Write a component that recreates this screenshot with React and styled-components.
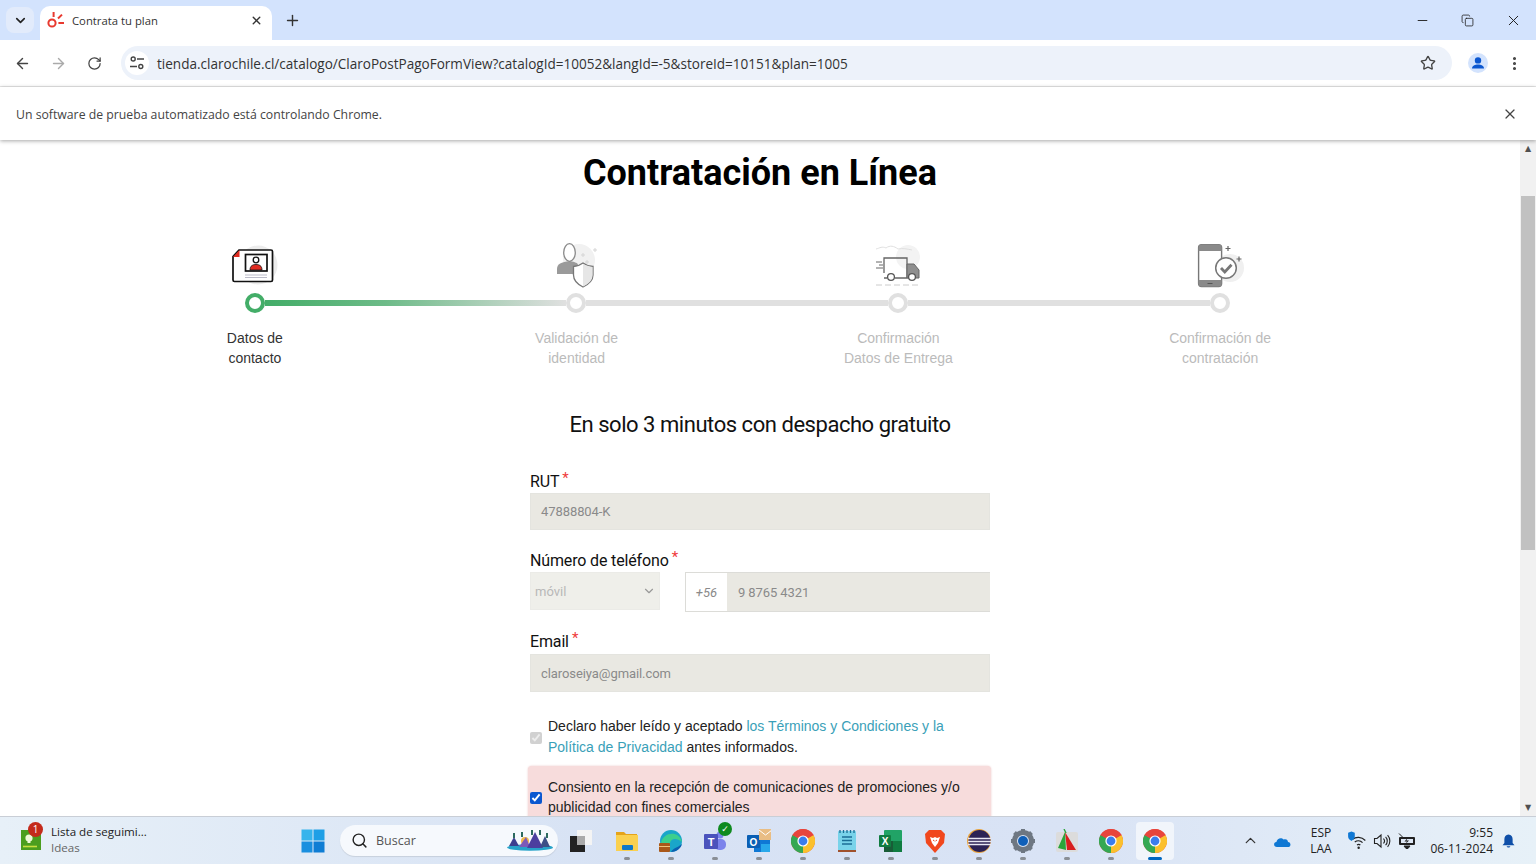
import styled, { createGlobalStyle } from 'styled-components'
import { ArrowLeft, ArrowRight, ChevronDown, ChevronUp, Copy, EllipsisVertical, Minus, Plus, RotateCw, Search, Star, X } from 'lucide-react'

const GlobalStyle = createGlobalStyle`
html, body { margin: 0; padding: 0; background: #fff; overflow: hidden; }
* { box-sizing: border-box; }
`

const ClaroLogo = () => (
    <svg width="18" height="18" viewBox="0 0 18 18" fill="none" stroke="#e8392f">
        <circle cx="5" cy="12" r="3.6" strokeWidth="2" />
        <path d="M6.6 1 L6.6 6 M11 7.5 L15 3.6 M11.4 12 H17" strokeWidth="2" />
    </svg>
)

const SiteSettings = () => (
    <svg width="16" height="16" viewBox="0 0 16 16" fill="none" stroke="#444" strokeWidth="1.4">
        <circle cx="4.2" cy="4" r="2" />
        <path d="M8 4 H15 M1 11.5 H8" />
        <circle cx="11.8" cy="11.5" r="2" />
    </svg>
)

const ProfileIcon = () => (
    <svg width="20" height="20" viewBox="0 0 20 20">
        <circle cx="10" cy="10" r="10" fill="#d3e3fd" />
        <circle cx="10" cy="7.4" r="3.2" fill="#0b57d0" />
        <path d="M4 15.6 C4 12.4 7 11.4 10 11.4 C13 11.4 16 12.4 16 15.6 Z" fill="#0b57d0" />
    </svg>
)

const ContactIcon = () => (
    <svg width="60" height="50" viewBox="0 0 60 50" fill="none">
        <circle cx="33" cy="25" r="19.5" fill="#ececec" />
        <path d="M14 10 H46 Q47.5 10 47.5 11.5 V40 Q47.5 41.5 46 41.5 H9.5 Q8 41.5 8 40 V16.5 Z" fill="#fff" stroke="#111" strokeWidth="1.7" />
        <path d="M8 17 L14.5 10 V17 Z" fill="#e02b20" />
        <rect x="20.5" y="14.5" width="21.5" height="16.5" fill="#fff" stroke="#111" strokeWidth="1.7" />
        <circle cx="31" cy="20" r="2.8" fill="#fff" stroke="#111" strokeWidth="1.3" />
        <path d="M25 30 C25 25.5 28 24.5 31 24.5 C34 24.5 37 25.5 37 30 Z" fill="#e02b20" stroke="#111" strokeWidth="0.8" />
        <path d="M20 35 H42 M20 37.5 H42" stroke="#aab" strokeWidth="0.8" />
    </svg>
)

const IdentityIcon = () => (
    <svg width="60" height="50" viewBox="0 0 60 50" fill="none">
        <circle cx="32" cy="20" r="16" fill="#f1f1f1" />
        <path d="M10 34 V29 C10 24 14 22 23 21 C28 22 31 23 31 25 L28 34 Z" fill="#9a9a9a" />
        <ellipse cx="22.5" cy="12.5" rx="5.8" ry="8.8" fill="#fff" stroke="#8a8a8a" strokeWidth="1.3" />
        <path d="M36 23 C32 26 29 26.5 26.5 26.5 V35 C26.5 41 31 44.5 36 47 C41 44.5 46 41 46 35 V26.5 C43 26.5 40 26 36 23 Z" fill="#fff" stroke="#777" strokeWidth="1.3" />
        <path d="M36 24 C40 26 43 26.5 45.5 27 V35 C45.5 41 41 44 36 46.5 Z" fill="#e6e6e6" />
        <path d="M36 13 V17 M34 15 H38 M48 8 V12 M46 10 H50 M40 20 V24 M38 22 H42" stroke="#d5d5d5" strokeWidth="1" />
    </svg>
)

const DeliveryIcon = () => (
    <svg width="60" height="50" viewBox="0 0 60 50" fill="none">
        <circle cx="40" cy="17" r="12" fill="#f3f3f3" />
        <path d="M8 9 C12 8 14 6 18 8 C22 5 26 6 30 9 C35 8 39 9 44 10" stroke="#ddd" strokeWidth="0.9" />
        <path d="M16 33 V18 H39 V38 H27 M16 38 H19" stroke="#666" strokeWidth="1.3" />
        <path d="M39 24 H46 L51 30 V38 H39 Z" fill="#8f8f8f" stroke="#666" strokeWidth="1" />
        <path d="M8 22 H14 M11 25 H15 M8 28 H15" stroke="#666" strokeWidth="1" />
        <circle cx="23" cy="37" r="3.4" fill="#fff" stroke="#555" strokeWidth="1.3" />
        <circle cx="44" cy="37" r="3.4" fill="#fff" stroke="#555" strokeWidth="1.3" />
        <path d="M8 45 H52" stroke="#ccc" strokeWidth="1" strokeDasharray="6 3" />
    </svg>
)

const ConfirmIcon = () => (
    <svg width="60" height="50" viewBox="0 0 60 50" fill="none">
        <circle cx="40" cy="28" r="14" fill="#f0f0f0" />
        <rect x="8.6" y="4.6" width="23" height="42" rx="3" fill="#fff" stroke="#777" strokeWidth="1.4" />
        <path d="M8.6 11 V7.6 Q8.6 4.6 11.6 4.6 H28.6 Q31.6 4.6 31.6 7.6 V11 Z" fill="#8a8a8a" />
        <path d="M8.6 40 V43.6 Q8.6 46.6 11.6 46.6 H28.6 Q31.6 46.6 31.6 43.6 V40 Z" fill="#8a8a8a" />
        <path d="M17.5 43.5 H22.5" stroke="#555" strokeWidth="1" />
        <circle cx="36" cy="28" r="10.3" fill="#fff" stroke="#777" strokeWidth="1.5" />
        <path d="M31 28 L34.8 32 L41.5 24.8" stroke="#777" strokeWidth="2.8" />
        <path d="M38 6 V11 M35.5 8.5 H40.5 M49 16.5 V21.5 M46.5 19 H51.5" stroke="#666" strokeWidth="1.2" />
    </svg>
)

const WatchlistIcon = () => (
    <svg width="24" height="24" viewBox="0 0 24 24">
        <rect x="1" y="3" width="20" height="20" fill="#4b9e1f" />
        <circle cx="9" cy="11" r="3.6" fill="#eef8d8" />
        <rect x="7.5" y="14" width="3" height="2" fill="#eef8d8" />
        <path d="M3 19.5 H17" stroke="#c8e040" strokeWidth="1.6" />
    </svg>
)

const StartIcon = () => (
    <svg width="24" height="24" viewBox="0 0 24 24">
        <rect x="0.5" y="0.5" width="11" height="11" fill="#36b4ec" />
        <rect x="12.5" y="0.5" width="11" height="11" fill="#1e9fe6" />
        <rect x="0.5" y="12.5" width="11" height="11" fill="#1a8fdf" />
        <rect x="12.5" y="12.5" width="11" height="11" fill="#0f7dd4" />
    </svg>
)

const SearchScene = () => (
    <svg width="48" height="24" viewBox="0 0 48 24">
        <ellipse cx="24" cy="18.5" rx="23" ry="3.2" fill="#27a3c9" />
        <circle cx="19" cy="12" r="4" fill="#f3b84a" />
        <path d="M3 17 L8 8 L13 17 Z" fill="#3c3f8f" />
        <path d="M13 18 L20 8 L24 18 Z" fill="#7c5ab8" />
        <path d="M21 19 L29 3 L37 19 Z" fill="#4c3f9f" />
        <path d="M34 18 L39 7 L44 18 Z" fill="#3d4f86" />
        <path d="M8 9 V4 M16 8 V3 M26 6 V1 M34 6 V1 M41 9 V4" stroke="#2d6a5f" strokeWidth="2" />
    </svg>
)

const TaskView = () => (
    <svg width="24" height="24" viewBox="0 0 24 24">
        <rect x="8" y="1" width="15" height="15" fill="#f4f4f4" />
        <rect x="1" y="7" width="15" height="16" fill="#222" />
        <rect x="8" y="7" width="8" height="9" fill="#aaa" />
    </svg>
)

const FolderIcon = () => (
    <svg width="24" height="24" viewBox="0 0 24 24">
        <path d="M1 3 H9 L11 5 H22 V8 H1 Z" fill="#e5a31a" />
        <rect x="1" y="6" width="22" height="16" fill="#fad04f" />
        <rect x="7" y="16" width="11" height="5" rx="1" fill="#0f78c8" />
    </svg>
)

const EdgeIcon = () => (
    <svg width="24" height="24" viewBox="0 0 24 24">
        <circle cx="12" cy="12" r="11" fill="#1aa6c9" />
        <path d="M2 14 C4 3 20 1 23 13 C18 9 12 9 11 14 Z" fill="#3ccf8e" />
        <path d="M12 23 C18 23 22 19 23 15 C18 19 14 19 12 23 Z" fill="#0b5fb0" />
        <rect x="0" y="14" width="11" height="9" rx="1" fill="#a9581a" />
        <rect x="0" y="17" width="11" height="1" fill="#f1c27a" />
    </svg>
)

const TeamsIcon = () => (
    <svg width="24" height="24" viewBox="0 0 24 24">
        <circle cx="17" cy="6" r="3.5" fill="#7b83eb" />
        <rect x="11" y="10" width="12" height="11" rx="5" fill="#7b83eb" />
        <rect x="1" y="5" width="14" height="15" rx="1" fill="#4b53bc" />
        <text x="8" y="16.5" fontSize="11" fontFamily="Liberation Sans" fontWeight="700" fill="#fff" textAnchor="middle">T</text>
    </svg>
)

const OutlookIcon = () => (
    <svg width="24" height="24" viewBox="0 0 24 24">
        <rect x="7" y="8" width="16" height="15" fill="#0f78d4" />
        <rect x="14" y="15" width="9" height="8" fill="#28a8ea" />
        <rect x="0" y="6" width="13" height="13" rx="1" fill="#0a5fb4" />
        <text x="6.5" y="16.5" fontSize="10" fontFamily="Liberation Sans" fontWeight="700" fill="#fff" textAnchor="middle">O</text>
        <rect x="12" y="0" width="13" height="11" fill="#e9bd84" />
        <path d="M12 1 L18.5 6 L25 1" fill="none" stroke="#fff" strokeWidth="1" />
    </svg>
)

const ChromeIcon = () => (
    <svg width="24" height="24" viewBox="0 0 24 24">
        <circle cx="12" cy="12" r="12" fill="#e8453c" />
        <path d="M12 12 L1.6 6 A12 12 0 0 0 12 24 Z" fill="#34a853" />
        <path d="M12 12 L12 24 A12 12 0 0 0 22.4 6 Z" fill="#fbc02d" />
        <path d="M12 12 L1.6 6 A12 12 0 0 1 22.4 6 Z" fill="#e8453c" />
        <circle cx="12" cy="12" r="5.6" fill="#fff" />
        <circle cx="12" cy="12" r="4.4" fill="#3b7ded" />
    </svg>
)

const NotepadIcon = () => (
    <svg width="24" height="24" viewBox="0 0 24 24">
        <rect x="3" y="2" width="18" height="20" rx="1" fill="#79d3ea" />
        <rect x="3" y="21" width="18" height="2" fill="#a0522d" />
        <path d="M5 1 V4 M8.5 1 V4 M12 1 V4 M15.5 1 V4 M19 1 V4" stroke="#1b6e96" strokeWidth="1.3" />
        <path d="M7 8 H17 M7 11.5 H17 M7 15 H17" stroke="#1b6e96" strokeWidth="1.4" />
    </svg>
)

const ExcelIcon = () => (
    <svg width="24" height="24" viewBox="0 0 24 24">
        <rect x="5" y="1" width="18" height="22" rx="1" fill="#21a366" />
        <rect x="14" y="12" width="9" height="11" fill="#107c41" />
        <rect x="5" y="12" width="9" height="11" fill="#185c37" />
        <rect x="0" y="6" width="12" height="12" rx="1" fill="#107c41" />
        <text x="6" y="15.5" fontSize="10" fontFamily="Liberation Sans" fontWeight="700" fill="#fff" textAnchor="middle">X</text>
    </svg>
)

const BraveIcon = () => (
    <svg width="24" height="24" viewBox="0 0 24 24">
        <path d="M6 1 H18 L22 5 L21 14 L12 24 L3 14 L2 5 Z" fill="#f1471d" />
        <path d="M7 8 L10 9 L12 8 L14 9 L17 8 L15 14 L12 18 L9 14 Z" fill="#fff" />
        <path d="M10 11 L11.5 12 M14 11 L12.5 12" stroke="#f1471d" strokeWidth="1" />
    </svg>
)

const EclipseIcon = () => (
    <svg width="24" height="24" viewBox="0 0 24 24">
        <circle cx="12" cy="12" r="12" fill="#e8a33d" />
        <circle cx="12.5" cy="12" r="11" fill="#2c2255" />
        <path d="M1 9.5 H24 M1 12.5 H24 M1 15.5 H24" stroke="#e9e7f3" strokeWidth="1.3" />
    </svg>
)

const GearIcon = () => (
    <svg width="24" height="24" viewBox="0 0 24 24">
        <circle cx="12" cy="12" r="8.5" fill="none" stroke="#6e7782" strokeWidth="5" />
        <path d="M12 0 V4 M12 20 V24 M0 12 H4 M20 12 H24 M3.5 3.5 L6.5 6.5 M17.5 17.5 L20.5 20.5 M3.5 20.5 L6.5 17.5 M17.5 6.5 L20.5 3.5" stroke="#6e7782" strokeWidth="4" />
        <circle cx="12" cy="12" r="5" fill="#0f5fb8" />
    </svg>
)

const SnipIcon = () => (
    <svg width="24" height="24" viewBox="0 0 24 24">
        <rect x="1" y="3" width="22" height="20" rx="2" fill="#dcdcdc" />
        <path d="M10 3 L21 21 H12 Z" fill="#d81e1e" />
        <path d="M10 3 L3 19 L11 21 Z" fill="#2aa53a" />
        <path d="M9 0 L11 4" stroke="#2aa53a" strokeWidth="1.4" />
    </svg>
)

const CloudIcon = () => (
    <svg width="18" height="12" viewBox="0 0 18 12">
        <path d="M4 12 C0.5 12 0 7.5 3.4 7 C4 3.4 8.4 2 10.6 4.6 C14 3.6 15 6 15 7 C18 7 18.6 12 15 12 Z" fill="#0f78d4" />
    </svg>
)

const WifiIcon = () => (
    <svg width="20" height="20" viewBox="0 0 18 18" fill="none" stroke="#222" strokeWidth="1.1">
        <path d="M5 7.5 C8 5 13 5 16.5 8.5 M7 10 C9 8.5 12 8.5 14 10.5 M9 12.5 C10 11.8 11.2 11.8 12 12.8" />
        <circle cx="10.5" cy="15" r="1.1" fill="#222" stroke="none" />
        <path d="M1 1.5 L4 0.5 L7 1.5 V5 C7 7 5.5 8 4 9 C2.5 8 1 7 1 5 Z" fill="#0f78d4" stroke="none" />
    </svg>
)

const SpeakerIcon = () => (
    <svg width="18" height="18" viewBox="0 0 18 18" fill="none" stroke="#222" strokeWidth="1.1">
        <path d="M1.5 6.5 H4 L8 3 V15 L4 11.5 H1.5 Z" />
        <path d="M10.5 6.5 C11.8 8 11.8 10 10.5 11.5 M12.6 4.8 C14.8 7 14.8 11 12.6 13.2 M14.6 3.2 C17.6 6.5 17.6 11.5 14.6 14.8" />
    </svg>
)

const BatteryIcon = () => (
    <svg width="18" height="18" viewBox="0 0 18 18">
        <rect x="1" y="5" width="16" height="8" rx="1" fill="#222" />
        <path d="M1 1.5 L4.5 5 M6 14 L12 14 L10 16.5 L8 16.5 Z" stroke="#222" fill="#222" />
        <path d="M3 7 H15 V11 H3 Z" fill="#dfe8f5" />
        <path d="M9.5 6 L6.5 9.5 H9 L7.5 12 L11 8.5 H8.5 Z" fill="#222" />
    </svg>
)

const BellIcon = () => (
    <svg width="15" height="16" viewBox="0 0 16 16">
        <path d="M8 1 C11 1 12.4 3.4 12.4 6 V10 L14.4 12.6 H1.6 L3.6 10 V6 C3.6 3.4 5 1 8 1 Z" fill="#0f4fa8" />
        <path d="M6 13.6 H10 C9.6 15.4 6.4 15.4 6 13.6 Z" fill="#0f4fa8" />
    </svg>
)

const steps = [
    { label: ['Datos de', 'contacto'], Icon: ContactIcon, active: true },
    { label: ['Validación de', 'identidad'], Icon: IdentityIcon },
    { label: ['Confirmación', 'Datos de Entrega'], Icon: DeliveryIcon },
    { label: ['Confirmación de', 'contratación'], Icon: ConfirmIcon },
]

const apps = [
    { Icon: TaskView },
    { Icon: FolderIcon, open: true },
    { Icon: EdgeIcon, open: true },
    { Icon: TeamsIcon, open: true, check: true },
    { Icon: OutlookIcon, open: true },
    { Icon: ChromeIcon, open: true },
    { Icon: NotepadIcon, open: true },
    { Icon: ExcelIcon, open: true },
    { Icon: BraveIcon, open: true },
    { Icon: EclipseIcon, open: true },
    { Icon: GearIcon, open: true },
    { Icon: SnipIcon, open: true },
    { Icon: ChromeIcon, open: true },
    { Icon: ChromeIcon, open: true, active: true },
]

const App = () => {
    return (
        <Screen>
            <GlobalStyle />
            <TabStrip>
                <TabMenu><ChevronDown size={15} strokeWidth={2.6} /></TabMenu>
                <Tab>
                    <ClaroLogo />
                    <TabTitle>Contrata tu plan</TabTitle>
                    <X size={13} strokeWidth={2.6} color="#333" />
                </Tab>
                <NewTab><Plus size={17} strokeWidth={2} /></NewTab>
                <WindowControls>
                    <WindowButton><Minus size={15} strokeWidth={1.5} /></WindowButton>
                    <WindowButton><Copy size={13} strokeWidth={1.5} /></WindowButton>
                    <WindowButton><X size={17} strokeWidth={1.4} /></WindowButton>
                </WindowControls>
            </TabStrip>

            <Toolbar>
                <NavButton><ArrowLeft size={17} strokeWidth={2} /></NavButton>
                <NavButton $off><ArrowRight size={17} strokeWidth={2} /></NavButton>
                <NavButton><RotateCw size={15} strokeWidth={2} /></NavButton>
                <Omnibox>
                    <SiteBadge><SiteSettings /></SiteBadge>
                    <Url>tienda.clarochile.cl/catalogo/ClaroPostPagoFormView?catalogId=10052&amp;langId=-5&amp;storeId=10151&amp;plan=1005</Url>
                    <Star size={16} strokeWidth={2} color="#444" />
                </Omnibox>
                <ProfileSlot><ProfileIcon /></ProfileSlot>
                <MenuSlot><EllipsisVertical size={17} strokeWidth={2.4} color="#444" /></MenuSlot>
            </Toolbar>

            <InfoBar>
                <InfoText>Un software de prueba automatizado está controlando Chrome.</InfoText>
                <X size={16} strokeWidth={1.8} color="#444" />
            </InfoBar>

            <Viewport>
                <Page>
                    <Title>Contratación en Línea</Title>

                    <Stepper>
                        <StepRow>
                            {steps.map(({ Icon }, i) => <StepIcon key={i}><Icon /></StepIcon>)}
                        </StepRow>
                        <Track>
                            <Dot $active />
                            <Bar $active />
                            <Dot />
                            <Bar />
                            <Dot />
                            <Bar />
                            <Dot />
                        </Track>
                        <StepRow>
                            {steps.map((s, i) => (
                                <StepLabel key={i} $active={s.active}>{s.label[0]}<br />{s.label[1]}</StepLabel>
                            ))}
                        </StepRow>
                    </Stepper>

                    <Subtitle>En solo 3 minutos con despacho gratuito</Subtitle>

                    <Form>
                        <FieldLabel>RUT<Req>*</Req></FieldLabel>
                        <TextValue $h={37}>47888804-K</TextValue>

                        <FieldLabel $gap={19}>Número de teléfono<Req>*</Req></FieldLabel>
                        <PhoneRow>
                            <PhoneType>
                                móvil
                                <ChevronDown size={14} strokeWidth={2} color="#999" />
                            </PhoneType>
                            <PhoneGroup>
                                <Prefix>+56</Prefix>
                                <PhoneValue>9 8765 4321</PhoneValue>
                            </PhoneGroup>
                        </PhoneRow>

                        <FieldLabel $gap={18} $tall>Email<Req>*</Req></FieldLabel>
                        <TextValue $h={38}>claroseiya@gmail.com</TextValue>

                        <CheckRow>
                            <Check type="checkbox" checked disabled readOnly />
                            <CheckText>Declaro haber leído y aceptado <TermsLink>los Términos y Condiciones y la Política de Privacidad</TermsLink> antes informados.</CheckText>
                        </CheckRow>
                        <ConsentBox>
                            <Check type="checkbox" checked readOnly />
                            <ConsentText>Consiento en la recepción de comunicaciones de promociones y/o publicidad con fines comerciales</ConsentText>
                        </ConsentBox>
                    </Form>
                </Page>
                <Scrollbar>
                    <ScrollArrow>▲</ScrollArrow>
                    <ScrollThumb />
                    <ScrollArrow>▼</ScrollArrow>
                </Scrollbar>
            </Viewport>

            <Taskbar>
                <Widget>
                    <WidgetIcon>
                        <WatchlistIcon />
                        <Badge>1</Badge>
                    </WidgetIcon>
                    <WidgetText>
                        <span>Lista de seguimi...</span>
                        <WidgetSub>Ideas</WidgetSub>
                    </WidgetText>
                </Widget>
                <StartSlot><StartIcon /></StartSlot>
                <SearchBox>
                    <Search size={17} strokeWidth={2} color="#222" />
                    <SearchText>Buscar</SearchText>
                    <SearchScene />
                </SearchBox>
                <AppList>
                    {apps.map(({ Icon, open, active, check }, i) => (
                        <AppSlot key={i} $active={active}>
                            <Icon />
                            {check && <PresenceBadge>✓</PresenceBadge>}
                            {open && <AppMark $active={active} />}
                        </AppSlot>
                    ))}
                </AppList>
                <Tray>
                    <TraySlot $w={26}><ChevronUp size={17} strokeWidth={1.8} color="#333" /></TraySlot>
                    <TraySlot $w={38}><CloudIcon /></TraySlot>
                    <Lang><span>ESP</span><span>LAA</span></Lang>
                    <TraySlot $w={25}><WifiIcon /></TraySlot>
                    <TraySlot $w={25}><SpeakerIcon /></TraySlot>
                    <TraySlot $w={25}><BatteryIcon /></TraySlot>
                    <Clock><span>9:55</span><span>06-11-2024</span></Clock>
                    <TraySlot $w={30}><BellIcon /></TraySlot>
                </Tray>
            </Taskbar>
        </Screen>
    )
}

export default App

const Screen = styled.div`
width: 1536px;
height: 864px;
display: flex;
flex-direction: column;
overflow: hidden;
background: #fff;
`

const TabStrip = styled.div`
height: 40px;
flex: none;
display: flex;
align-items: flex-end;
background: #d3e3fd;
`

const TabMenu = styled.div`
width: 28px;
height: 26px;
margin: 0 6px 7px 6px;
display: flex;
align-items: center;
justify-content: center;
border-radius: 8px;
background: #e2ebfb;
color: #222;
`

const Tab = styled.div`
width: 232px;
height: 34px;
display: flex;
align-items: center;
gap: 7px;
padding: 0 9px 6px 7px;
background: #fff;
border-radius: 10px 10px 0 0;
`

const TabTitle = styled.div`
flex: 1;
font: 11.3px "Open Sans", sans-serif;
color: #333;
`

const NewTab = styled.div`
width: 40px;
height: 40px;
display: flex;
align-items: center;
justify-content: center;
color: #333;
`

const WindowControls = styled.div`
margin-left: auto;
display: flex;
height: 40px;
`

const WindowButton = styled.div`
width: 45.5px;
display: flex;
align-items: center;
justify-content: center;
color: #222;
`

const Toolbar = styled.div`
height: 47px;
flex: none;
display: flex;
align-items: center;
background: #fff;
border-bottom: 1px solid #e8e8e8;
border-radius: 8px 8px 0 0;
padding-left: 4px;
`

const NavButton = styled.div`
width: 36px;
display: flex;
justify-content: center;
color: ${p => p.$off ? '#aaa' : '#444'};
`

const Omnibox = styled.div`
width: 1331px;
height: 34px;
margin-left: 9px;
display: flex;
align-items: center;
padding: 0 16px 0 4px;
background: #edf2fa;
border-radius: 17px;
`

const SiteBadge = styled.div`
width: 24px;
height: 24px;
display: flex;
align-items: center;
justify-content: center;
background: #fff;
border-radius: 50%;
`

const Url = styled.div`
flex: 1;
margin-left: 8px;
padding-top: 1px;
font: 13.55px "Open Sans", sans-serif;
color: #333;
white-space: nowrap;
`

const ProfileSlot = styled.div`
width: 52px;
display: flex;
justify-content: center;
`

const MenuSlot = styled.div`
width: 20px;
display: flex;
justify-content: center;
`

const InfoBar = styled.div`
height: 53px;
flex: none;
display: flex;
align-items: center;
justify-content: space-between;
padding: 0 18px 0 16px;
background: #fff;
box-shadow: 0 1px 4px rgba(0, 0, 0, 0.35);
position: relative;
z-index: 1;
`

const InfoText = styled.div`
padding-top: 1px;
font: 12.25px "Open Sans", sans-serif;
color: #444;
`

const Viewport = styled.div`
flex: 1;
min-height: 0;
display: flex;
overflow: hidden;
`

const Page = styled.div`
flex: 1;
min-width: 0;
padding-top: 13px;
`

const Title = styled.h1`
margin: 0;
font: 700 36px/40px Roboto, sans-serif;
color: #000;
text-align: center;
`

const Stepper = styled.div`
width: 1287px;
margin: 47px 0 0 94px;
`

const StepRow = styled.div`
display: grid;
grid-template-columns: repeat(4, 1fr);
`

const StepIcon = styled.div`
height: 50px;
display: flex;
justify-content: center;
`

const Track = styled.div`
height: 20px;
margin: 3px 0 15px;
padding: 0 151px 0 150.5px;
display: flex;
align-items: center;
`

const Dot = styled.div`
width: 20px;
height: 20px;
flex: none;
border-radius: 50%;
background: #fff;
border: 4px solid ${p => p.$active ? '#43ad68' : '#e0e0e0'};
`

const Bar = styled.div`
flex: 1;
height: 6px;
background: ${p => p.$active ? 'linear-gradient(90deg, #43ad68 0%, #6dbb88 40%, #e0e0e0 100%)' : '#e0e0e0'};
`

const StepLabel = styled.div`
font: 14px/20px "Liberation Sans", Arial, sans-serif;
color: ${p => p.$active ? '#333' : '#bbb'};
text-align: center;
`

const Subtitle = styled.h2`
margin: 42px 0 30px;
font: 400 22px/30px Roboto, sans-serif;
letter-spacing: -0.46px;
color: #111;
text-align: center;
`

const Form = styled.div`
width: 460px;
margin: 0 auto;
`

const FieldLabel = styled.div`
height: ${p => p.$tall ? '24px' : '23px'};
margin-top: ${p => p.$gap || 0}px;
font: 16px/23px Roboto, sans-serif;
letter-spacing: -0.15px;
color: #111;
`

const Req = styled.span`
margin-left: 3px;
color: #ef3b3b;
font-size: 15px;
line-height: 0;
vertical-align: 4px;
`

const TextValue = styled.div`
height: ${p => p.$h}px;
display: flex;
align-items: center;
padding: 0 10px;
background: #e9e8e2;
border: 1px solid #e4e4df;
font: 13px Roboto, sans-serif;
letter-spacing: -0.08px;
color: #8a8a8a;
`

const PhoneRow = styled.div`
display: flex;
justify-content: space-between;
height: 40px;
`

const PhoneType = styled.div`
width: 130px;
height: 38px;
display: flex;
align-items: center;
justify-content: space-between;
padding: 0 3px 0 4px;
background: #efefea;
border: 1px solid #ebebe7;
font: 13px Roboto, sans-serif;
color: #b8b8b8;
`

const PhoneGroup = styled.div`
width: 305px;
display: flex;
border: 1px solid #dcdcd8;
border-right: none;
`

const Prefix = styled.div`
width: 41px;
display: flex;
align-items: center;
justify-content: center;
background: #fff;
font: italic 13px Roboto, sans-serif;
color: #8a8a8a;
`

const PhoneValue = styled.div`
flex: 1;
display: flex;
align-items: center;
padding-left: 11px;
background: #e9e8e2;
font: 13px Roboto, sans-serif;
letter-spacing: -0.1px;
color: #8a8a8a;
`

const CheckRow = styled.div`
margin-top: 24px;
display: flex;
align-items: center;
gap: 6px;
`

const Check = styled.input`
width: 12px;
height: 12px;
margin: 2px 0 0;
flex: none;
accent-color: #0b57d0;
`

const CheckText = styled.div`
font: 14px/20.5px "Liberation Sans", Arial, sans-serif;
color: #222;
`

const ConsentText = styled(CheckText)`
line-height: 20px;
`

const TermsLink = styled.a`
color: #3a9fb8;
`

const ConsentBox = styled(CheckRow)`
margin: 9px -1px 0 -2px;
padding: 11px 20px 10px 2px;
background: #f7dcdc;
border-radius: 4px;
box-shadow: 0 0 2px rgba(230, 180, 180, 0.8);
`

const Scrollbar = styled.div`
width: 16px;
flex: none;
display: flex;
flex-direction: column;
align-items: center;
background: #f1f1f1;
`

const ScrollArrow = styled.div`
height: 17px;
font: 8px/17px "DejaVu Sans", sans-serif;
color: #505050;
`

const ScrollThumb = styled.div`
width: 14px;
height: 354px;
margin-top: 39px;
margin-bottom: auto;
background: #c1c1c1;
`

const Taskbar = styled.div`
height: 48px;
flex: none;
display: flex;
align-items: center;
background: linear-gradient(90deg, #e7f0f8 0%, #d7e2f4 40%, #d9e3f5 70%, #e7f1f8 100%);
border-top: 1px solid #c9ced6;
`

const Widget = styled.div`
width: 301px;
display: flex;
align-items: center;
padding-left: 20px;
`

const WidgetIcon = styled.div`
width: 31px;
position: relative;
`

const Badge = styled.div`
position: absolute;
top: -5px;
left: 8px;
width: 15px;
height: 15px;
border-radius: 50%;
background: #c42b1c;
color: #fff;
font: 10px/15px "Open Sans", sans-serif;
text-align: center;
`

const WidgetText = styled.div`
display: flex;
flex-direction: column;
gap: 1px;
padding-bottom: 2px;
font: 11.6px/15px "Open Sans", sans-serif;
color: #222;
`

const WidgetSub = styled.span`
color: #666;
`

const StartSlot = styled.div`
width: 39px;
padding-top: 4px;
`

const SearchBox = styled.div`
width: 218px;
height: 31px;
display: flex;
align-items: center;
padding: 0 4px 0 11px;
background: #f6f9fd;
border-radius: 16px;
box-shadow: 0 1px 1px rgba(0, 0, 0, 0.1);
`

const SearchText = styled.div`
flex: 1;
margin-left: 8px;
padding-bottom: 1px;
font: 12.5px "Open Sans", sans-serif;
color: #555;
`

const AppList = styled.div`
display: flex;
margin-left: 1px;
`

const AppSlot = styled.div`
width: 44px;
height: 38px;
display: flex;
align-items: center;
justify-content: center;
position: relative;
&:first-child { margin-right: 2px; }
&::before {
    content: '';
    display: ${p => p.$active ? 'block' : 'none'};
    position: absolute;
    inset: 0 3px;
    background: rgba(255, 255, 255, 0.6);
    border-radius: 4px;
}
& > svg { position: relative; }
`

const AppMark = styled.div`
position: absolute;
bottom: 0;
left: 50%;
transform: translateX(-50%);
width: ${p => p.$active ? '14px' : '6px'};
height: 3px;
border-radius: 2px;
background: ${p => p.$active ? '#0067c0' : '#8a8f96'};
`

const PresenceBadge = styled.div`
position: absolute;
top: 0;
right: 5px;
width: 14px;
height: 14px;
border-radius: 50%;
background: #0f8a1f;
color: #fff;
font: 700 9px/14px "DejaVu Sans", sans-serif;
text-align: center;
`

const Tray = styled.div`
margin-left: auto;
padding-right: 13px;
display: flex;
align-items: center;
`

const TraySlot = styled.div`
width: ${p => p.$w}px;
display: flex;
justify-content: center;
`

const Lang = styled.div`
width: 40px;
margin-right: 3.5px;
display: flex;
flex-direction: column;
align-items: center;
gap: 1px;
font: 12px/15px "Open Sans", sans-serif;
color: #222;
`

const Clock = styled.div`
width: 73.5px;
display: flex;
flex-direction: column;
align-items: flex-end;
gap: 1px;
font: 12px/15px "Open Sans", sans-serif;
color: #222;
`
